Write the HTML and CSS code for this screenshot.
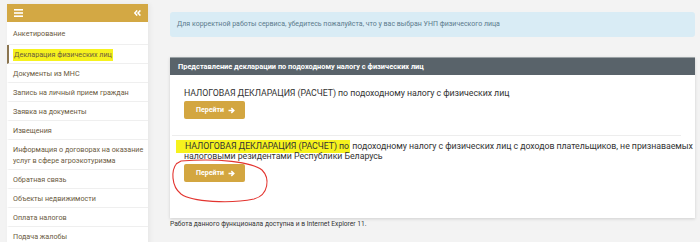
FILE: index.html
```html
<!DOCTYPE html>
<html lang="ru">
<head>
  <meta charset="UTF-8">
  <title>Декларация физических лиц</title>
  <link rel="stylesheet" href="styles.css">
</head>
<body>

  <div class="layout">
    <aside class="sidebar">
      <div class="sidebar-head">
        <svg class="burger" width="9" height="8" viewBox="0 0 9 8">
          <rect x="0" y="0" width="9" height="1.6" fill="#fff"/>
          <rect x="0" y="3.2" width="9" height="1.6" fill="#fff"/>
          <rect x="0" y="6.4" width="9" height="1.6" fill="#fff"/>
        </svg>
        <svg class="collapse" width="7" height="6" viewBox="0 0 7 6">
          <path d="M3.2 0.4 L0.8 3 L3.2 5.6 M6.4 0.4 L4 3 L6.4 5.6" stroke="#fff" stroke-width="1.5" fill="none"/>
        </svg>
      </div>
      <ul class="menu">
        <li><a href="#">Анкетирование</a></li>
        <li class="active"><a href="#"><span class="marker">Декларация физических лиц</span></a></li>
        <li><a href="#">Документы из МНС</a></li>
        <li><a href="#">Запись на личный прием граждан</a></li>
        <li><a href="#">Заявка на документы</a></li>
        <li><a href="#">Извещения</a></li>
        <li><a href="#">Информация о договорах на оказание услуг в сфере агроэкотуризма</a></li>
        <li><a href="#">Обратная связь</a></li>
        <li><a href="#">Объекты недвижимости</a></li>
        <li><a href="#">Оплата налогов</a></li>
        <li><a href="#">Подача жалобы</a></li>
      </ul>
    </aside>

    <main class="content">
      <div class="alert">Для корректной работы сервиса, убедитесь пожалуйста, что у вас выбран УНП физического лица</div>

      <div class="panel">
        <div class="panel-head">Представление декларации по подоходному налогу с физических лиц</div>
        <div class="panel-body">
          <div class="decl">
            <p>НАЛОГОВАЯ ДЕКЛАРАЦИЯ (РАСЧЕТ) по подоходному налогу с физических лиц</p>
            <a class="btn" href="#">Перейти
              <svg width="7" height="7" viewBox="0 0 7 7"><path d="M0.5 3.5 H5.5 M3.3 1.1 L5.8 3.5 L3.3 5.9" stroke="#fff" stroke-width="1.5" fill="none"/></svg>
            </a>
          </div>
          <div class="decl last">
            <p><span class="marker wide">НАЛОГОВАЯ ДЕКЛАРАЦИЯ (РАСЧЕТ) по</span> подоходному налогу с физических лиц с доходов плательщиков, не признаваемых налоговыми резидентами Республики Беларусь</p>
            <a class="btn" href="#">Перейти
              <svg width="7" height="7" viewBox="0 0 7 7"><path d="M0.5 3.5 H5.5 M3.3 1.1 L5.8 3.5 L3.3 5.9" stroke="#fff" stroke-width="1.5" fill="none"/></svg>
            </a>
          </div>
        </div>
      </div>

      <p class="note">Работа данного функционала доступна и в Internet Explorer 11.</p>
    </main>
  </div>

  <!-- pen mark drawn over the screenshot -->
  <svg class="scribble" width="700" height="242" viewBox="0 0 700 242">
    <path d="M177 163 C171 170 171 186 181 194 C192 202 230 204 254 199 C269 195 270 178 262 170 C252 162 218 158 181 161 L176 164" stroke="#e3342f" stroke-width="1.1" fill="none"/>
  </svg>

</body>
</html>
```

FILE: styles.css
```css
body {
  margin: 0;
  background-color: #f3f3f3;
  font-family: Roboto, 'Liberation Sans', sans-serif;
  color: #333;
}

.layout {
  display: flex;
  align-items: flex-start;
}

/* Sidebar */
.sidebar {
  width: 141px;
  margin: 4px 0 0 7px;
  background-color: #fff;
  box-shadow: 2px 0 5px rgba(0, 0, 0, 0.05);
}

.sidebar-head {
  height: 18px;
  background-color: #d3a844;
  display: flex;
  align-items: center;
  justify-content: space-between;
  padding: 0 7px 0 7px;
}

.menu {
  list-style: none;
  margin: 0;
  padding: 0;
}

.menu li {
  border-bottom: 1px solid #efefef;
  border-left: 2px solid transparent;
}

.menu li:first-child a {
  padding-top: 6px;
  padding-bottom: 5px;
}

.menu li.active {
  border-left-color: #8b7550;
}

.menu a {
  display: block;
  padding: 4px 2px 3px 4px;
  font-size: 7.2px;
  line-height: 11px;
  color: #6a5a3e;
  text-decoration: none;
}

.marker {
  background-color: #f6f21e;
  padding: 1px 1px 2px;
}

.marker.wide {
  box-shadow: -8px 0 0 #f6f21e;
}

/* Main */
.content {
  width: 525px;
  margin-left: 22px;
  padding-top: 12px;
}

.alert {
  height: 25px;
  line-height: 25px;
  padding: 0 7px;
  background-color: #d9ecf5;
  border-radius: 3px;
  font-size: 7px;
  color: #5b7b8c;
}

.panel {
  margin-top: 20px;
  background-color: #fff;
  box-shadow: 0 1px 3px rgba(0, 0, 0, 0.15);
}

.panel-head {
  height: 17px;
  line-height: 17px;
  border-top: 1px solid #9aa2a5;
  background-color: #59636a;
  color: #fff;
  font-size: 7.4px;
  font-weight: bold;
  padding-left: 8px;
}

.panel-body {
  padding: 0 0 0 2px;
}

.decl {
  padding: 13px 0 16px 12px;
  border-bottom: 1px solid #ededed;
  margin-right: 14px;
}

.decl.last {
  border-bottom: none;
  margin-right: 0;
  padding-top: 5px;
  padding-bottom: 36px;
}

.decl p {
  margin: 0 0 3px;
  font-size: 8.8px;
  letter-spacing: -0.05px;
  line-height: 10px;
}

.btn {
  display: flex;
  width: max-content;
  align-items: center;
  gap: 4px;
  height: 18px;
  padding: 0 10px 0 12px;
  background-color: #d3a640;
  border-radius: 2px;
  color: #fff;
  font-size: 7px;
  font-weight: bold;
  text-decoration: none;
}

.decl.last .btn {
  margin-top: 3px;
}

.note {
  margin: 0;
  padding-top: 1px;
  font-size: 6.7px;
  line-height: 10px;
  color: #333;
}

.scribble {
  position: absolute;
  top: 0;
  left: 0;
  pointer-events: none;
}
```
